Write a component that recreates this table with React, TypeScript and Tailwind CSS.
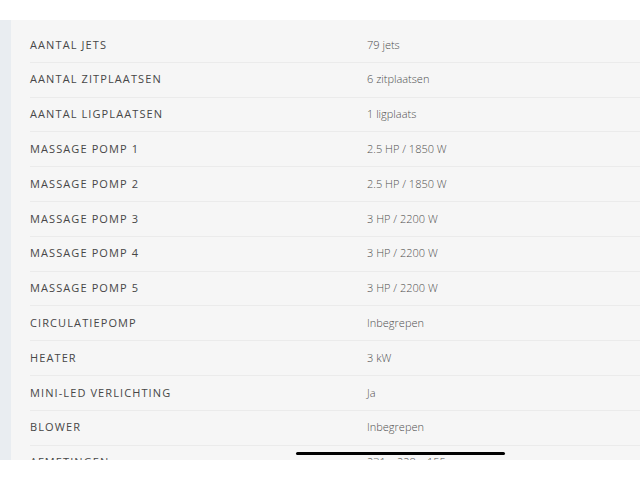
import React from "react";

const specs: [string, string][] = [
  ["AANTAL JETS", "79 jets"],
  ["AANTAL ZITPLAATSEN", "6 zitplaatsen"],
  ["AANTAL LIGPLAATSEN", "1 ligplaats"],
  ["MASSAGE POMP 1", "2.5 HP / 1850 W"],
  ["MASSAGE POMP 2", "2.5 HP / 1850 W"],
  ["MASSAGE POMP 3", "3 HP / 2200 W"],
  ["MASSAGE POMP 4", "3 HP / 2200 W"],
  ["MASSAGE POMP 5", "3 HP / 2200 W"],
  ["CIRCULATIEPOMP", "Inbegrepen"],
  ["HEATER", "3 kW"],
  ["MINI-LED VERLICHTING", "Ja"],
  ["BLOWER", "Inbegrepen"],
  ["AFMETINGEN", "231 x 228 x 155"],
];

export default function App() {
  return (
    <div
      className="relative w-[640px] h-[480px] bg-white overflow-hidden"
      style={{ fontFamily: '"Open Sans", "Liberation Sans", sans-serif' }}
    >
      <div className="mt-[20px] h-[440px] flex overflow-hidden bg-[#f6f6f6]">
        {/* left edge strip */}
        <div className="w-[11px] shrink-0 bg-[#e9edf1]" />

        {/* spec table */}
        <div className="flex-1 pt-[8px] pl-[19px]">
          {specs.map(([label, value]) => (
            <div
              key={label}
              className="h-[34.8px] flex items-center border-b border-[#ebebeb]"
            >
              <div className="w-[337px] text-[11px] font-medium tracking-[0.1em] text-[#474747]">
                {label}
              </div>
              <div className="text-[11px] font-light text-[#4f4f4f]">{value}</div>
            </div>
          ))}
        </div>
      </div>

      {/* home indicator */}
      <div className="absolute left-[296px] top-[452px] w-[209px] h-[3px] rounded-full bg-black" />
    </div>
  );
}
